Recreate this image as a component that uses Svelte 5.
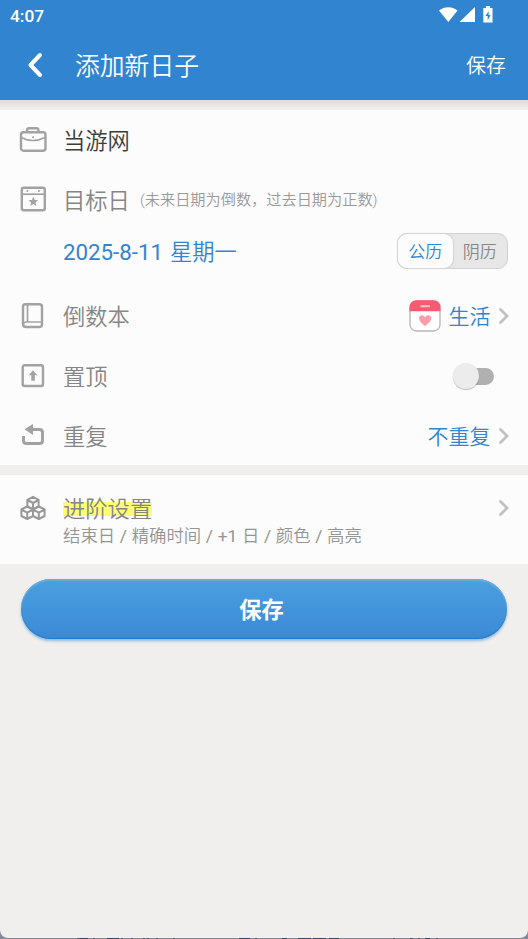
<script>
  let title = $state('当游网');
  let calendar = $state('solar');
  let pinned = $state(false);
</script>

{#snippet chevron()}
  <svg class="chevron" width="10" height="16" viewBox="0 0 10 16">
    <path d="M1.500 1.500 8 8l-6.500 6.500" />
  </svg>
{/snippet}

<div class="window">
  <div class="screen">
    <header>
      <div class="status-bar">
        <span class="clock">4:07</span>
        <svg width="56" height="18" viewBox="0 0 56 18" fill="#fff">
          <path d="M0 4.500C5 0 13.500 0 18.500 4.500L9.300 16Z" />
          <path d="M36 1V16H20.500Z" />
          <path fill-rule="evenodd" d="M47 0h4v2h2.500v14.500H44.300V2H47zM49.700 5 46.500 10h2.200v4.500l2.900-5.600h-2z" />
        </svg>
      </div>
      <div class="title-bar">
        <button class="back" aria-label="返回">
          <svg width="16" height="26" viewBox="0 0 16 26">
            <path d="M13 3 3.500 13 13 23" />
          </svg>
        </button>
        <h1>添加新日子</h1>
        <button class="save-link">保存</button>
      </div>
    </header>

    <main>
      <section class="card">
        <div class="row">
          <svg class="icon" width="28" height="28" viewBox="0 0 28 28">
            <rect x="2" y="6.200" width="24.500" height="18.500" rx="2.500" />
            <path d="M8 6V4.500Q8 2.200 10 2.200h7.500Q19.500 2.200 19.500 4.500V6" />
            <path class="thin" d="M2 11.500Q14 17.500 26 11.500" />
            <circle class="solid" cx="14" cy="11.300" r="1" />
          </svg>
          <span class="label dark">{title}</span>
        </div>

        <div class="row">
          <svg class="icon" width="28" height="28" viewBox="0 0 28 28">
            <rect x="2.800" y="1.700" width="23" height="22.500" rx="2" />
            <path class="thin" d="M3 8.200H25" />
            <circle class="solid" cx="8.300" cy="5" r="1" />
            <circle class="solid" cx="20" cy="5" r="1" />
            <path class="solid" d="m14.300 10.700 1.400 3.200 3.500.3-2.700 2.300.8 3.500-3-1.900-3 1.900.8-3.500-2.700-2.300 3.500-.3z" />
          </svg>
          <span class="label">目标日</span>
          <span class="hint">(未来日期为倒数，过去日期为正数)</span>
        </div>

        <div class="date-row">
          <span class="date"><span class="latin">2025-8-11</span> 星期一</span>
          <div class="segmented">
            <button class:active={calendar === 'solar'} onclick={() => (calendar = 'solar')}>公历</button>
            <button class:active={calendar === 'lunar'} onclick={() => (calendar = 'lunar')}>阴历</button>
          </div>
        </div>

        <div class="row">
          <svg class="icon" width="28" height="28" viewBox="0 0 28 28">
            <path d="M6.200 2.200H20Q23 2.200 23 4.700V22.500Q23 25 20 25H7Q4 25 4 22V4.700Q4 2.200 6.200 2.200z" />
            <path class="thin" d="M8.500 2.500V20M4.500 22Q5 20 7 20H23" />
          </svg>
          <span class="label">倒数本</span>
          <div class="value">
            <svg class="book" width="32" height="32" viewBox="0 0 32 32">
              <rect x="1" y="1" width="30" height="30" rx="6.500" fill="#fff" stroke="#b5b5b5" stroke-width="1.300" />
              <path d="M.500 11.200V8Q.500.300 8 .300H24Q31.500.300 31.500 8v3.200z" fill="#f85a72" />
              <path d="M11.500 6.200h9.500" stroke="#ffc4cc" stroke-width="2" />
              <path d="M16 26C12.500 23.500 10 21 10 18.300 10 14.500 14.500 14.200 16 17.200 17.500 14.200 22.300 14.500 22.300 18.300 22.300 21 19.500 23.500 16 26Z" fill="#ff9cab" />
            </svg>
            <span class="value-text">生活</span>
            {@render chevron()}
          </div>
        </div>

        <div class="row">
          <svg class="icon" width="28" height="28" viewBox="0 0 28 28">
            <rect x="3.700" y="3.200" width="20.300" height="20.800" rx="2" />
            <path class="solid" d="m14 8.200 4.300 5h-2.500v5.600h-3.500v-5.600H9.700z" />
          </svg>
          <span class="label">置顶</span>
          <button class="toggle" class:on={pinned} aria-label="置顶" aria-pressed={pinned} onclick={() => (pinned = !pinned)}>
            <span class="knob"></span>
          </button>
        </div>

        <div class="row">
          <svg class="icon" width="28" height="28" viewBox="0 0 28 28">
            <path class="thick" d="M12 7.500H20.500Q23.500 7.500 23.500 10.500V18.500Q23.500 21.500 20.500 21.500H7.500Q4.500 21.500 4.500 18.500V14" />
            <path class="solid" d="M14 2v11L5.500 7.300z" />
          </svg>
          <span class="label">重复</span>
          <div class="value">
            <span class="value-text">不重复</span>
            {@render chevron()}
          </div>
        </div>
      </section>

      <section class="card advanced">
        <svg class="icon" width="28" height="28" viewBox="0 0 28 28">
          <g class="cubes">
            <path d="m13 1.800 5.600 3v6.500l-5.600 3-5.600-3V4.800zM7.400 5l5.600 3 5.600-3M13 8v6" />
            <path d="m7.200 11.500 5.800 3v6.500l-5.800 3-5.800-3v-6.500zM1.400 14.700l5.800 3 5.800-3M7.200 17.700v6" />
            <path d="m18.800 11.500 5.800 3v6.500l-5.800 3-5.800-3v-6.500zM13 14.700l5.800 3 5.800-3M18.800 17.700v6" />
          </g>
        </svg>
        <div class="advanced-text">
          <span class="label"><mark>进阶设置</mark></span>
          <span class="summary">结束日 <span class="latin">/</span> 精确时间 <span class="latin">/ +1</span> 日 <span class="latin">/</span> 颜色 <span class="latin">/</span> 高亮</span>
        </div>
        {@render chevron()}
      </section>

      <button class="submit">保存</button>
    </main>
  </div>
</div>

<style>
  :global(body) {
    margin: 0;
  }
  .window {
    width: 528px;
    height: 939px;
    overflow: hidden;
    font-family: Roboto, 'Noto Sans CJK SC', sans-serif;
    font-weight: 350;
    /* sliver of the page behind the window */
    background: linear-gradient(90deg, #858a9a 77px, #4d5677 77px 80px, #34436d 80px 88px, #858a9a 88px 93px, #4d5677 93px 95px, #858a9a 95px 107px, #34436d 107px 119px, #858a9a 119px 121px, #4d5677 121px 123px, #858a9a 123px 131px, #4d5677 131px 133px, #858a9a 133px 143px, #4d5677 143px 145px, #858a9a 145px 147px, #4d5677 147px 149px, #858a9a 149px 156px, #4d5677 156px 158px, #858a9a 158px 173px, #4d5677 173px 175px, #858a9a 175px 239px, #34436d 239px 250px, #858a9a 250px 255px, #4d5677 255px 257px, #858a9a 257px 282px, #34436d 282px 287px, #858a9a 287px 298px, #34436d 298px 311px, #858a9a 311px 313px, #34436d 313px 326px, #858a9a 326px 329px, #34436d 329px 339px, #858a9a 339px 393px, #4d5677 393px 395px, #858a9a 395px 410px, #4d5677 410px 413px, #858a9a 413px 418px, #4d5677 418px 420px, #858a9a 420px 425px, #34436d 425px 430px, #858a9a 430px 436px, #4d5677 436px 438px, #858a9a 438px);
  }
  .screen {
    height: 938px;
    background: #f0efed;
    border-radius: 0 0 8px 8px;
  }
  button {
    border: none;
    background: none;
    padding: 0;
    font: inherit;
    color: inherit;
    cursor: pointer;
  }
  /* Roboto has no demilight, so digits and slashes go up to regular */
  .latin {
    font-weight: 400;
  }
  header {
    height: 100px;
    background: #3184cf;
    color: #fff;
  }
  .status-bar {
    display: flex;
    justify-content: space-between;
    align-items: center;
    height: 30px;
    padding: 0 33px 0 10px;
  }
  .clock {
    padding-top: 1px;
    font-size: 17.3px;
    font-weight: 500;
  }
  .title-bar {
    display: flex;
    align-items: center;
    height: 70px;
    padding: 0 22px 0 27px;
  }
  .back {
    display: flex;
    margin-right: 32px;
  }
  .back path {
    fill: none;
    stroke: #fff;
    stroke-width: 4;
    stroke-linecap: round;
    stroke-linejoin: round;
  }
  h1 {
    flex: 1;
    margin: 0;
    padding-bottom: 2px;
    font-size: 24.8px;
    font-weight: 350;
  }
  .save-link {
    padding-bottom: 2px;
    font-size: 20px;
  }
  main {
    display: flex;
    flex-direction: column;
    gap: 10px;
    padding-top: 10px;
    background: linear-gradient(#dddcda, #f0efed 9px);
  }
  .card {
    background: #fcfcfc;
  }
  .card:first-child {
    height: 355px;
  }
  .row {
    display: flex;
    align-items: center;
    height: 60px;
    padding: 0 19px;
  }
  .icon {
    flex-shrink: 0;
    margin-right: 16px;
    fill: none;
    stroke: #a2a2a2;
    stroke-width: 2.4;
    stroke-linejoin: round;
  }
  .thin {
    stroke-width: 1.7;
  }
  .thick {
    stroke-width: 3;
  }
  .solid {
    fill: #a2a2a2;
    stroke: none;
  }
  .label {
    font-size: 22.3px;
    line-height: 32px;
    color: #858585;
  }
  .row .label {
    padding-top: 1px;
  }
  .label.dark {
    color: #3c3c3c;
  }
  .hint {
    margin-left: 10px;
    padding-bottom: 4px;
    font-size: 15.2px;
    color: #999;
  }
  .date-row {
    display: flex;
    justify-content: space-between;
    align-items: center;
    height: 42px;
    padding: 0 20px 14px 63px;
  }
  .date {
    padding-bottom: 2px;
    font-size: 22.3px;
    word-spacing: 1.4px;
    color: #3184cf;
  }
  .segmented {
    display: flex;
    box-sizing: border-box;
    width: 111px;
    height: 36px;
    border: 1px solid #d2d2d2;
    border-radius: 10px;
    background: #e7e7e7;
    font-size: 17px;
    color: #888;
  }
  .segmented button {
    flex: 1;
    padding-bottom: 2px;
    border-radius: 9px;
  }
  .segmented button.active {
    background: #fcfcfc;
    box-shadow: 0 0 1px 1px #d5d5d5;
    color: #3184cf;
  }
  .value {
    display: flex;
    align-items: center;
    margin-left: auto;
    font-size: 21px;
    color: #3184cf;
  }
  .value-text {
    padding-bottom: 2px;
  }
  .book {
    margin: 0 8px 1px 0;
  }
  .chevron {
    margin-left: 8.5px;
    fill: none;
    stroke: #c0c0c0;
    stroke-width: 2.7;
    stroke-linecap: round;
  }
  .toggle {
    display: flex;
    align-items: center;
    width: 36px;
    height: 17px;
    margin: 0 15px 0 auto;
    border-radius: 9px;
    background: #b0b0b0;
  }
  .knob {
    flex-shrink: 0;
    width: 26px;
    height: 26px;
    margin-left: -5px;
    border-radius: 50%;
    background: #ececec;
    box-shadow: 0 1px 1px rgba(0, 0, 0, 0.25);
    transition: margin 0.15s;
  }
  .toggle.on {
    background: #93bfe6;
  }
  .toggle.on .knob {
    margin-left: 15px;
    background: #3184cf;
  }
  .advanced {
    display: flex;
    align-items: flex-start;
    box-sizing: border-box;
    height: 89px;
    padding: 18px 19px 0;
  }
  .advanced .icon {
    margin: 2px 16px 0 1px;
    stroke: #989898;
  }
  .cubes {
    stroke-width: 2;
  }
  .advanced-text {
    display: flex;
    flex: 1;
    flex-direction: column;
    margin-left: -1px;
  }
  .advanced .chevron {
    margin-top: 7px;
  }
  mark {
    background: linear-gradient(transparent 6px, #ffff77 6px 20px, transparent 20px);
    color: inherit;
  }
  .summary {
    font-size: 17.4px;
    line-height: 22px;
    word-spacing: 0.4px;
    color: #949494;
  }
  .submit {
    height: 60px;
    margin: 5px 21px 0;
    padding: 0 5px 2px 0;
    border-radius: 30px;
    background: linear-gradient(#4ba0df, #3a89d6);
    box-shadow: inset 0 2px 1px #69acd9, inset 0 -1px 1px #2879c2, 0 2px 3px rgba(49, 132, 207, 0.5);
    font-size: 22.3px;
    font-weight: 700;
    color: #fff;
  }
</style>
